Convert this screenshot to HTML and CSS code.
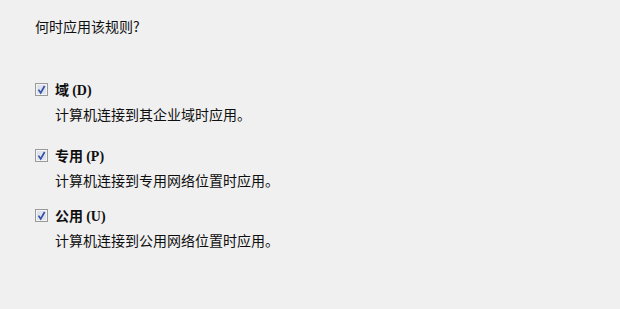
FILE: index.html
```html
<!DOCTYPE html>
<html lang="zh-CN">
<head>
<meta charset="utf-8">
<link rel="stylesheet" href="styles.css">
</head>
<body>
<div class="page">
  <div class="title">何时应用该规则?</div>
  <div class="options">
    <div class="option">
      <svg class="check" width="13" height="13" viewBox="0 0 13 13"><rect x="0.5" y="0.5" width="12" height="12" fill="#f4f4f4" stroke="#9a9a9a"/><rect x="2" y="2" width="9" height="9" fill="#dfe3ec"/><path d="M3.5 6.6 L5.7 9.9 L9.6 3" fill="none" stroke="#3550a8" stroke-width="1.7"/></svg>
      <div class="text">
        <div class="label">域 <span class="key">(D)</span></div>
        <div class="desc">计算机连接到其企业域时应用。</div>
      </div>
    </div>
    <div class="option">
      <svg class="check" width="13" height="13" viewBox="0 0 13 13"><rect x="0.5" y="0.5" width="12" height="12" fill="#f4f4f4" stroke="#9a9a9a"/><rect x="2" y="2" width="9" height="9" fill="#dfe3ec"/><path d="M3.5 6.6 L5.7 9.9 L9.6 3" fill="none" stroke="#3550a8" stroke-width="1.7"/></svg>
      <div class="text">
        <div class="label">专用 <span class="key">(P)</span></div>
        <div class="desc">计算机连接到专用网络位置时应用。</div>
      </div>
    </div>
    <div class="option">
      <svg class="check" width="13" height="13" viewBox="0 0 13 13"><rect x="0.5" y="0.5" width="12" height="12" fill="#f4f4f4" stroke="#9a9a9a"/><rect x="2" y="2" width="9" height="9" fill="#dfe3ec"/><path d="M3.5 6.6 L5.7 9.9 L9.6 3" fill="none" stroke="#3550a8" stroke-width="1.7"/></svg>
      <div class="text">
        <div class="label">公用 <span class="key">(U)</span></div>
        <div class="desc">计算机连接到公用网络位置时应用。</div>
      </div>
    </div>
  </div>
</div>
</body>
</html>
```
FILE: styles.css
```css
html, body {
  margin: 0;
  padding: 0;
  background: #f0f0f0;
}
body {
  width: 620px;
  height: 309px;
  overflow: hidden;
  font-family: "Noto Sans CJK SC", "Noto Sans", sans-serif;
  font-size: 14px;
  color: #0f0f0f;
}
.page {
  padding: 17px 0 0 35px;
}
.title {
  line-height: 18px;
}
.options {
  margin-top: 45px;
  display: flex;
  flex-direction: column;
}
.option {
  display: flex;
  align-items: flex-start;
  gap: 7px;
}
.option:nth-child(2) {
  margin-top: 23px;
}
.option:nth-child(3) {
  margin-top: 17px;
}
.check {
  flex: none;
  margin-top: 3px;
}
.text {
  display: flex;
  flex-direction: column;
  gap: 5px;
}
.label {
  line-height: 18px;
  font-weight: bold;
}
.key {
  font-family: "Liberation Serif", "Noto Sans CJK SC", serif;
  font-weight: bold;
  font-size: 14px;
}
.desc {
  line-height: 18px;
}
```
